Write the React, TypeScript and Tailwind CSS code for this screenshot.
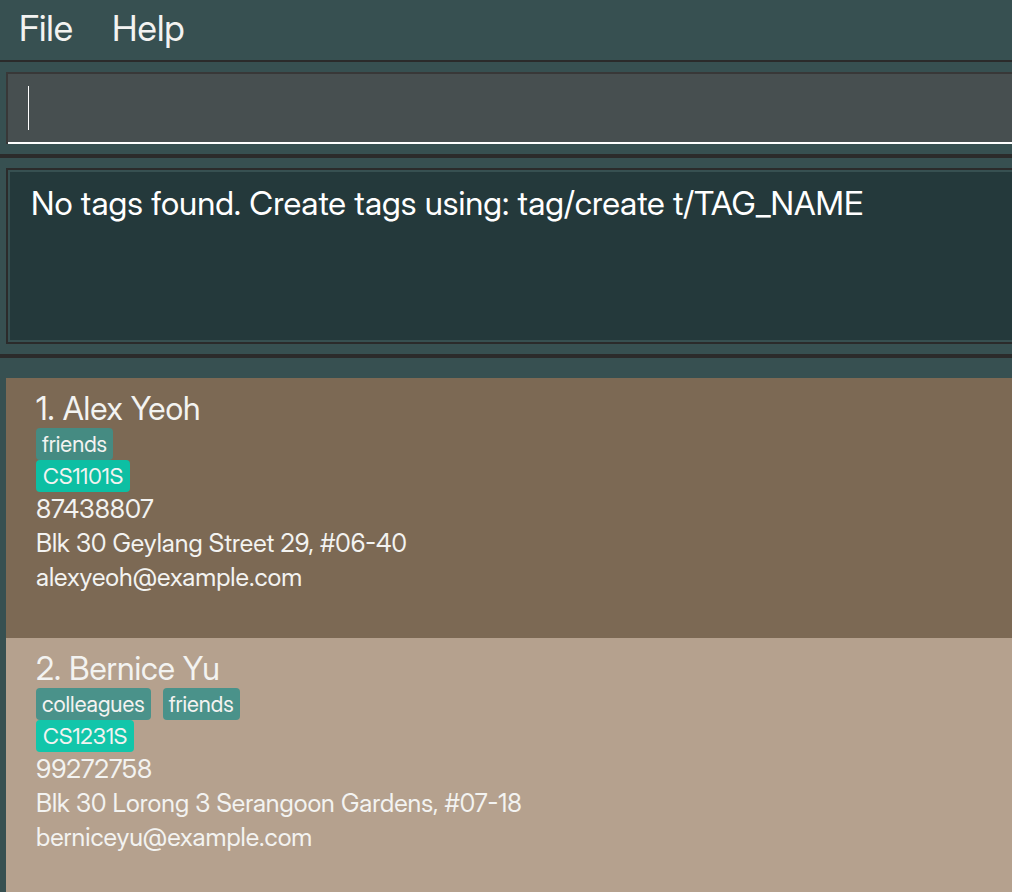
type Person = {
  name: string;
  tags: string[];
  module: string;
  phone: string;
  address: string;
  email: string;
};

const people: Person[] = [
  {
    name: "Alex Yeoh",
    tags: ["friends"],
    module: "CS1101S",
    phone: "87438807",
    address: "Blk 30 Geylang Street 29, #06-40",
    email: "alexyeoh@example.com",
  },
  {
    name: "Bernice Yu",
    tags: ["colleagues", "friends"],
    module: "CS1231S",
    phone: "99272758",
    address: "Blk 30 Lorong 3 Serangoon Gardens, #07-18",
    email: "berniceyu@example.com",
  },
];

const themes = [
  { card: "bg-[#7c6954]", tag: "bg-[#458b82]", module: "bg-[#0dbfa3]" },
  { card: "bg-[#b5a18e]", tag: "bg-[#4a928a]", module: "bg-[#12c6aa]" },
];

function PersonCard({ person, index }: { person: Person; index: number }) {
  const theme = themes[index % 2];
  return (
    <li className={`shrink-0 px-[30px] pt-3 pb-11 ${theme.card}`}>
      <h2 className="text-[32px] leading-[38px]">
        {index + 1}. {person.name}
      </h2>
      <div className="flex gap-3">
        {person.tags.map((tag) => (
          <span key={tag} className={`rounded px-[6px] text-[22px] leading-8 ${theme.tag}`}>
            {tag}
          </span>
        ))}
      </div>
      <div className="flex">
        <span className={`rounded px-[7px] text-[22px] leading-8 ${theme.module}`}>{person.module}</span>
      </div>
      <div className="text-[25px] leading-[34px]">
        <p className="text-[26px]">{person.phone}</p>
        <p>{person.address}</p>
        <p>{person.email}</p>
      </div>
    </li>
  );
}

export default function App() {
  return (
    <div className="flex h-screen flex-col overflow-hidden bg-[#375051] font-['Inter_Display','Inter',sans-serif] text-[#f3f3f1] [font-variation-settings:'opsz'_32]">
      <nav className="flex shrink-0 items-start gap-[39px] border-b-2 border-[#2b2b2b] px-[19px] pt-[6px] pb-[10px] text-[36px] leading-[44px]">
        <button type="button">File</button>
        <button type="button">Help</button>
      </nav>
      <section className="shrink-0 border-b-4 border-[#2b2b2b] pt-[10px] pb-[10px] pl-[6px]">
        <div className="border-l-2 border-[#383838]">
          <div className="border-y-2 border-t-[#383838] border-b-white bg-[#474f50] py-3 pl-5">
            <input
              aria-label="Command"
              className="block h-11 w-full border-l border-white bg-transparent text-[33px] outline-none"
            />
          </div>
        </div>
      </section>
      <section className="shrink-0 border-b-4 border-[#2b2b2b] pt-[10px] pb-[10px] pl-[6px]">
        <div className="border-2 border-r-0 border-[#2b2b2b]">
          <output className="block min-h-[172px] border-2 border-r-0 border-[#375051] bg-[#24393b] px-[21px] pt-[9px] text-[33px] leading-[44px] text-white">
            No tags found. Create tags using: tag/create t/TAG_NAME
          </output>
        </div>
      </section>
      <ol className="flex min-h-0 flex-1 flex-col overflow-hidden pt-5 pl-[6px]">
        {people.map((person, index) => (
          <PersonCard key={person.name} person={person} index={index} />
        ))}
      </ol>
    </div>
  );
}
